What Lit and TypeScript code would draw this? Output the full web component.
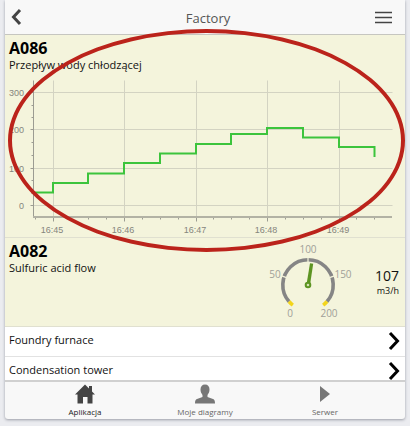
import { LitElement, html, svg, css } from "lit";
import { customElement } from "lit/decorators.js";

const MINUTES = [
  { x: 48, label: "16:45" },
  { x: 119, label: "16:46" },
  { x: 191, label: "16:47" },
  { x: 262, label: "16:48" },
  { x: 334, label: "16:49" },
];
const LEVELS = [
  { y: 19, label: "300" },
  { y: 56, label: "200" },
  { y: 95, label: "100" },
  { y: 132, label: "0" },
];
const MINOR_X = [30, 66, 83, 101, 137, 155, 173, 208, 226, 244, 280, 298, 316, 351, 369];
const MINOR_Y = [32, 44, 69, 82, 107, 120];

@customElement("flow-chart")
export class FlowChart extends LitElement {
  static styles = css`
    :host { display: block; }
    svg { display: block; width: 100%; }
    .grid { stroke: #d3d3c2; }
    .axis { stroke: #9c9c92; }
    .base { stroke: #b2b2a4; stroke-width: 2; }
    .series { fill: none; stroke: #3cc43c; stroke-width: 2; }
    text { font: 9px "Liberation Sans", Arial, sans-serif; fill: #85857c; }
    .y { text-anchor: end; }
    .x { text-anchor: middle; }
  `;
  render() {
    return html`<svg viewBox="0 0 400 164" role="img" aria-label="Przepływ wody chłodzącej">
      <g transform="translate(0.5 0.5)">
        ${MINUTES.map((m) => svg`<path class="grid" d="M${m.x} 7V143"></path>`)}
        ${LEVELS.map((l) => svg`<path class="grid" d="M28 ${l.y}H387"></path>
          <path class="axis" d="M25 ${l.y}h3"></path>`)}
        ${MINOR_Y.map((y) => svg`<path class="axis" d="M26 ${y}h2"></path>`)}
        ${MINOR_X.map((x) => svg`<path class="axis" d="M${x} 144v2"></path>`)}
        ${MINUTES.map((m) => svg`<path class="axis" d="M${m.x} 144v4"></path>`)}
        <path class="axis" d="M28 7V144"></path>
      </g>
      <path class="base" d="M28 144H387"></path>
      ${LEVELS.map((l) => svg`<text class="y" x="19" y=${l.y + 4}>${l.label}</text>`)}
      ${MINUTES.map((m) => svg`<text class="x" x=${m.x - 1} y="160">${m.label}</text>`)}
      <path class="series" d="M29 119.500H48V110H83V100.500H119V90H155V80.500H191V71H226V61H262V55H298V64.500H334V74H369.500V84"></path>
    </svg>`;
  }
}

@customElement("flow-gauge")
export class FlowGauge extends LitElement {
  static styles = css`
    :host { display: block; width: 90px; }
    svg { display: block; width: 100%; }
    .ring { fill: none; stroke: #858585; stroke-width: 3.6; }
    .end { stroke: #f3d51c; }
    .tick { stroke: #f3f3da; stroke-width: 1.2; }
    .needle { fill: #5d9422; }
    .hub { fill: #d5e2b4; stroke: #5d9422; stroke-width: 2; }
    text { font: 10px "Open Sans", "Noto Sans", sans-serif; fill: #a0a098; text-anchor: middle; }
  `;
  private arc(from: number, to: number) {
    const p = (a: number) => {
      const r = (a * Math.PI) / 180;
      return `${(43 + 25.2 * Math.cos(r)).toFixed(2)} ${(45 + 25.2 * Math.sin(r)).toFixed(2)}`;
    };
    return `M${p(from)}A25.2 25.2 0 ${to - from > 180 ? 1 : 0} 1 ${p(to)}`;
  }
  render() {
    return html`<svg viewBox="0 2 90 82" role="img" aria-label="107 m3/h">
      <path class="ring" d=${this.arc(139, 401)}></path>
      <path class="ring end" d=${this.arc(127, 139)}></path>
      <path class="ring end" d=${this.arc(401, 413)}></path>
      ${[199, 270, 341].map((a) => svg`<path class="tick" d="M65 45h6" transform="rotate(${a} 43 45)"></path>`)}
      <path class="needle" d="M41.500 44.500L45 23.200L48.200 23.700L45 45z"></path>
      <circle class="hub" cx="43" cy="45" r="2.300"></circle>
      <text x="43" y="13">100</text>
      <text x="10" y="38">50</text>
      <text x="78" y="38">150</text>
      <text x="25" y="77">0</text>
      <text x="64" y="77">200</text>
    </svg>`;
  }
}

@customElement("app-root")
export class AppRoot extends LitElement {
  static styles = css`
    :host {
      display: block;
      box-sizing: border-box;
      height: 100vh;
      padding: 0 5px 7px;
      background: #ebecf0;
      font-family: "Open Sans", "Noto Sans", sans-serif;
      color: #111;
    }
    .shell {
      position: relative;
      display: flex;
      flex-direction: column;
      height: 100%;
      background: #f8f8f8;
      border-radius: 0 0 3px 3px;
      box-shadow: 0 1px 3px #9a9da6;
    }
    header {
      display: grid;
      grid-template-columns: 50px 1fr 44px;
      align-items: center;
      height: 34px;
      border-bottom: 1px solid #c6c6c0;
    }
    h1 { margin: 0; padding-top: 2px; text-align: center; font-size: 13px; font-weight: 400; line-height: 20px; color: #555; }
    button { padding: 0; border: 0; background: none; font: inherit; cursor: pointer; }
    .icon { display: flex; justify-content: center; }
    .back { justify-content: flex-start; padding-left: 6px; }
    .line { fill: none; stroke: #444; }
    .list { flex: 1; min-height: 0; overflow-y: auto; scrollbar-width: none; background: #fff; }
    .tile { background: #f4f4dc; border-bottom: 1px solid #e0e0d0; padding-top: 4px; }
    .flow { display: flex; align-items: flex-start; height: 84px; }
    .names { flex: 1; padding-left: 4px; }
    h2 { margin: 0; font-size: 16px; line-height: 18px; font-weight: 700; color: #000; }
    p { margin: 0; font-size: 11px; line-height: 16px; }
    .reading { width: 44px; padding: 25px 6px 0 0; text-align: right; }
    .value { font-size: 14px; line-height: 18px; }
    .unit { font-size: 9px; line-height: 12px; }
    .link {
      display: flex;
      align-items: center;
      justify-content: space-between;
      height: 27px;
      padding: 0 5px 2px 4px;
      border-bottom: 1px solid #e2e2e2;
      font-size: 11px;
      color: #111;
      text-decoration: none;
    }
    .link span { padding-bottom: 2px; }
    nav { display: flex; height: 37px; padding: 0 20px; border-top: 2px solid #d0d0d0; }
    .tab {
      flex: 1;
      display: flex;
      flex-direction: column;
      align-items: center;
      gap: 2px;
      padding-top: 2px;
      font-size: 8px;
      line-height: 12px;
      color: #666;
    }
    .tab svg { fill: #777; }
    .active { color: #222; }
    .active svg { fill: #444; }
    .mark {
      position: absolute;
      top: 29px;
      left: 3px;
      right: 0;
      height: 223px;
      box-sizing: border-box;
      border: 4px solid #bb231b;
      border-radius: 50%;
      pointer-events: none;
    }
  `;
  private row(name: string) {
    return html`<a class="link" href="#">
      <span>${name}</span>
      <svg width="12" height="20" viewBox="0 0 12 20"><path d="M2 2L9.500 10L2 18" fill="none" stroke="#000" stroke-width="3"></path></svg>
    </a>`;
  }
  render() {
    return html`<div class="shell">
      <header>
        <button class="icon back" aria-label="Back">
          <svg width="22" height="20" viewBox="0 0 22 20"><path class="line" stroke-width="3" d="M9 3L2.500 10L9 17"></path></svg>
        </button>
        <h1>Factory</h1>
        <button class="icon" aria-label="Menu">
          <svg width="17" height="14" viewBox="0 0 17 14"><path class="line" stroke-width="1.600" d="M0 2.500H17M0 7.500H17M0 12.500H17"></path></svg>
        </button>
      </header>
      <main class="list">
        <section class="tile">
          <div class="names"><h2>A086</h2><p>Przepływ wody chłodzącej</p></div>
          <flow-chart></flow-chart>
        </section>
        <section class="tile flow">
          <div class="names"><h2>A082</h2><p>Sulfuric acid flow</p></div>
          <flow-gauge></flow-gauge>
          <div class="reading"><div class="value">107</div><div class="unit">m3/h</div></div>
        </section>
        ${this.row("Foundry furnace")} ${this.row("Condensation tower")}
      </main>
      <nav>
        <button class="tab active">
          <svg width="20" height="20" viewBox="0 0 20 20"><path d="M10 0.500L14 4.500V2H17V7.500L20 10.500H17.500V19.500H12.500V13H8V19.500H2.500V10.500H0z"></path></svg>
          Aplikacja
        </button>
        <button class="tab">
          <svg width="20" height="20" viewBox="0 0 20 20"><path d="M10 0.500C13 0.500 14.500 2.500 14.500 5.500C14.500 8 13.500 9.500 12.500 11V13L18 15C19.500 15.500 20 17 20 19.500H0C0 17 0.500 15.500 2 15L7.500 13V11C6.500 9.500 5.500 8 5.500 5.500C5.500 2.500 7 0.500 10 0.500z"></path></svg>
          Moje diagramy
        </button>
        <button class="tab">
          <svg width="20" height="20" viewBox="0 0 20 20"><path d="M5 2L15 10L5 18z"></path></svg>
          Serwer
        </button>
      </nav>
      <div class="mark"></div>
    </div>`;
  }
}
